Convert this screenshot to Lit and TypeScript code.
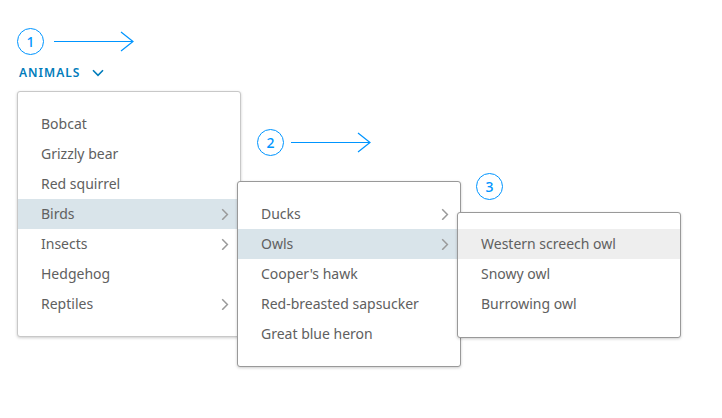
import { LitElement, css, html, nothing, svg } from "lit";
import { customElement, property } from "lit/decorators.js";
import { classMap } from "lit/directives/class-map.js";

interface Item {
  label: string;
  nested?: boolean;
  state?: "open" | "hover";
}

const ANIMALS: Item[] = [
  { label: "Bobcat" },
  { label: "Grizzly bear" },
  { label: "Red squirrel" },
  { label: "Birds", nested: true, state: "open" },
  { label: "Insects", nested: true },
  { label: "Hedgehog" },
  { label: "Reptiles", nested: true },
];

const BIRDS: Item[] = [
  { label: "Ducks", nested: true },
  { label: "Owls", nested: true, state: "open" },
  { label: "Cooper's hawk" },
  { label: "Red-breasted sapsucker" },
  { label: "Great blue heron" },
];

const OWLS: Item[] = [
  { label: "Western screech owl", state: "hover" },
  { label: "Snowy owl" },
  { label: "Burrowing owl" },
];

@customElement("step-marker")
export class StepMarker extends LitElement {
  @property({ type: Number }) step = 1;
  @property({ type: Boolean }) arrow = false;

  static styles = css`
    :host {
      display: flex;
      align-items: center;
      gap: 7px;
      height: 27px;
      color: #0095ff;
    }
    .circle {
      box-sizing: border-box;
      flex: none;
      width: 27px;
      height: 27px;
      border: 1px solid currentColor;
      border-radius: 50%;
      font: 500 14px/25px "Noto Sans", sans-serif;
      text-align: center;
    }
    .arrow {
      flex: none;
      width: 80px;
      height: 21px;
      fill: none;
      stroke: currentColor;
      stroke-width: 1.2;
    }
  `;

  render() {
    return html`
      <span class="circle">${this.step}</span>
      ${this.arrow
        ? html`<svg class="arrow" viewBox="0 0 80 21" aria-hidden="true">
            ${svg`<path d="M0 10.5H79M67 1L79 10.5L67 20" />`}
          </svg>`
        : nothing}
    `;
  }
}

@customElement("menu-panel")
export class MenuPanel extends LitElement {
  @property({ attribute: false }) items: Item[] = [];
  @property() label = "";

  static styles = css`
    :host {
      display: block;
      box-sizing: border-box;
      padding: 17px 0;
      background: #fff;
      border: 1px solid #999;
      border-radius: 3px;
      box-shadow: 0 1px 3px rgba(0, 0, 0, 0.2);
    }
    :host([root]) {
      border-color: #c8c8c8;
    }
    .list {
      margin: 0;
      padding: 0;
      list-style: none;
    }
    .item {
      display: flex;
      align-items: center;
      justify-content: space-between;
      box-sizing: border-box;
      width: 100%;
      height: 30px;
      padding: 0 11px 0 23px;
      border: 0;
      background: transparent;
      color: #606060;
      font: 14px/20px "Noto Sans", sans-serif;
      text-align: left;
      white-space: nowrap;
    }
    .open {
      background: #d9e4ea;
    }
    .hover,
    .item:not(.open):hover {
      background: #eee;
    }
    .text {
      padding-bottom: 1px;
    }
    .chevron {
      flex: none;
      width: 8px;
      height: 12px;
      fill: none;
      stroke: #9a9a9a;
      stroke-width: 1.5;
    }
  `;

  render() {
    return html`
      <ul class="list" role="menu" aria-label=${this.label}>
        ${this.items.map(
          (item) => html`
            <li role="none">
              <button
                type="button"
                role="menuitem"
                class=${classMap({
                  item: true,
                  open: item.state === "open",
                  hover: item.state === "hover",
                })}
              >
                <span class="text">${item.label}</span>
                ${item.nested
                  ? html`<svg class="chevron" viewBox="0 0 8 12" aria-hidden="true">
                      ${svg`<path d="M1.2 1.2L6.4 6.5L1.2 11.8" />`}
                    </svg>`
                  : nothing}
              </button>
            </li>
          `
        )}
      </ul>
    `;
  }
}

@customElement("app-root")
export class AppRoot extends LitElement {
  static styles = css`
    :host {
      display: block;
      min-height: 100vh;
      background: #fff;
    }
    .stage {
      display: flex;
      align-items: flex-start;
      padding: 0 41px 48px 17px;
    }
    .level {
      flex: 1 1 0;
      min-width: 0;
      max-width: 224px;
    }
    .level + .level {
      position: relative;
      margin-left: -4px;
    }
    .first {
      padding-top: 28px;
    }
    .second {
      padding-top: 129px;
    }
    .third {
      padding-top: 173px;
    }
    .first step-marker {
      gap: 10px;
    }
    .second step-marker {
      margin: 0 0 25px 20px;
    }
    .third step-marker {
      margin: 0 0 12px 19px;
    }
    .third menu-panel {
      padding: 16px 0 18px;
    }
    .trigger {
      display: flex;
      align-items: center;
      gap: 12px;
      height: 36px;
      padding: 0 2px;
      border: 0;
      background: transparent;
      color: #007cbb;
      font: 600 12px/20px "Noto Sans", sans-serif;
      letter-spacing: 1px;
    }
    .caret {
      width: 12px;
      height: 8px;
      fill: none;
      stroke: currentColor;
      stroke-width: 1.6;
    }
  `;

  render() {
    return html`
      <main class="stage">
        <section class="level first">
          <step-marker step="1" arrow></step-marker>
          <button class="trigger" type="button" aria-haspopup="menu" aria-expanded="true">
            ANIMALS
            <svg class="caret" viewBox="0 0 12 8" aria-hidden="true">
              ${svg`<path d="M1 1.2L6 6.4L11 1.2" />`}
            </svg>
          </button>
          <menu-panel root label="Animals" .items=${ANIMALS}></menu-panel>
        </section>
        <section class="level second">
          <step-marker step="2" arrow></step-marker>
          <menu-panel label="Birds" .items=${BIRDS}></menu-panel>
        </section>
        <section class="level third">
          <step-marker step="3"></step-marker>
          <menu-panel label="Owls" .items=${OWLS}></menu-panel>
        </section>
      </main>
    `;
  }
}
